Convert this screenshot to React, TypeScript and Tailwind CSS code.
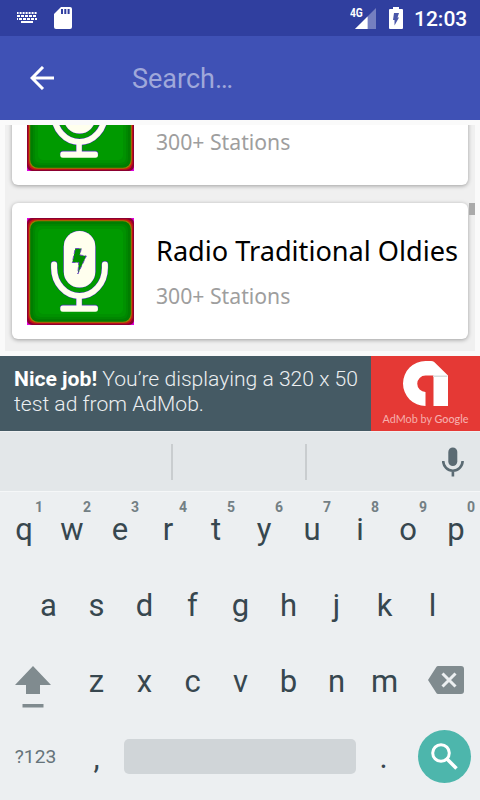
import React from 'react';

const TOP_ROW = ['q', 'w', 'e', 'r', 't', 'y', 'u', 'i', 'o', 'p'];
const HOME_ROW = ['a', 's', 'd', 'f', 'g', 'h', 'j', 'k', 'l'];
const BOTTOM_ROW = ['z', 'x', 'c', 'v', 'b', 'n', 'm'];

const STATIONS = [
  { id: 1, title: '', subtitle: '300+ Stations' },
  { id: 2, title: 'Radio Traditional Oldies', subtitle: '300+ Stations' },
];

const StatusBar: React.FC = () => (
  <div className="flex h-9 shrink-0 items-center bg-[#303f9f] text-white">
    <svg className="ml-[17px] h-3 w-5" viewBox="0 0 20 12" fill="none" stroke="white">
      <path d="M0 1h20" strokeWidth="1.8" strokeDasharray="2 1" strokeDashoffset="0.4" />
      <path d="M0 4h20" strokeWidth="1.8" strokeDasharray="3 1" />
      <path d="M0 7h20" strokeWidth="1.8" strokeDasharray="3 1" strokeDashoffset="2" />
      <path d="M4 10h12" strokeWidth="2" />
    </svg>
    <svg className="ml-[17px] h-[22px] w-[18px]" viewBox="0 0 18 22">
      <path d="M7 0h9a2 2 0 0 1 2 2v18a2 2 0 0 1-2 2H2a2 2 0 0 1-2-2V7z" fill="white" />
      <path d="M7 2h2v5H7zM10.3 2h2v5h-2zM13.6 2h2v5h-2z" fill="#303f9f" />
    </svg>
    <div className="ml-auto flex items-start">
      <span className="-mt-px w-3 text-[12px] leading-[12px] font-bold">
        <span className="inline-block origin-left scale-x-85">4G</span>
      </span>
      <svg className="-ml-[7px] h-[21px] w-[21px]" viewBox="0 0 21 21">
        <path d="M21 0v21H0z" fill="#757fc0" />
        <path d="M12.6 8.4V21H0z" fill="white" />
      </svg>
      <svg className="-mt-px ml-[13px] h-[22px] w-[14px]" viewBox="0 0 14 22">
        <path d="M4 0h6v2h3q1 0 1 1v18q0 1-1 1H1q-1 0-1-1V3q0-1 1-1h3z" fill="white" />
        <path d="M5 6h5l-1.5 4.5H10L5.5 18.5V13H4z" fill="#4a57aa" />
      </svg>
    </div>
    <span className="mt-[2px] mr-3 ml-[11px] w-[54px] text-[21px] leading-6 font-medium">12:03</span>
  </div>
);

const SearchBar: React.FC = () => (
  <div className="flex h-[84px] shrink-0 items-center bg-[#3f51b5]">
    <svg className="ml-[30px] h-6 w-6" viewBox="0 0 24 24" fill="none" stroke="white" strokeWidth="3">
      <path d="M24 12H2M13 1L2 12l11 11" />
    </svg>
    <span className="mt-0.5 ml-[78px] text-[27px] text-[#9fa8da]">Search…</span>
  </div>
);

const MicLogo: React.FC = () => (
  <svg className="h-[107px] w-[107px] shrink-0" viewBox="0 0 107 107">
    <rect width="107" height="107" fill="#e000e0" />
    <rect width="107" height="107" rx="5" fill="#8c0030" />
    <rect x="1.2" y="1.2" width="104.6" height="104.6" rx="7" fill="#c81414" />
    <rect x="2.2" y="2.2" width="102.6" height="102.6" rx="8" fill="#9a7800" />
    <rect x="3.2" y="3.2" width="100.6" height="100.6" rx="8" fill="#007d00" />
    <rect x="6" y="6" width="95" height="95" rx="6" fill="#008700" />
    <rect x="8" y="8" width="91" height="91" rx="5" fill="#009100" />
    <rect x="11" y="11" width="85" height="85" rx="5" fill="#009a00" />
    <g fill="#5028c8" stroke="#5028c8" strokeWidth="0.8">
      <rect x="36.8" y="13" width="31.5" height="56.5" rx="15.7" />
      <rect x="49.4" y="79" width="5.4" height="9" />
      <rect x="33.3" y="87.2" width="37.6" height="5" rx="2.5" />
    </g>
    <path d="M27.1 46.5V50a25.4 28 0 0 0 50.8 0v-3.5" fill="none" stroke="#5028c8" strokeWidth="6.8" strokeLinecap="round" />
    <g fill="#ffffee">
      <rect x="36.8" y="13" width="31.5" height="56.5" rx="15.7" />
      <rect x="49.4" y="79" width="5.4" height="10" />
      <rect x="33.3" y="87.4" width="37.6" height="6.4" rx="2.5" />
    </g>
    <path d="M27.1 46.5V50a25.4 28 0 0 0 50.8 0v-3.5" fill="none" stroke="#ffffee" strokeWidth="6" strokeLinecap="round" />
    <path
      d="M48.3 30.5h6l-1.5 6.5 6.5 1-8.5 18 1-11.5h-6.5z"
      fill="#008c00"
      stroke="#6a3cc8"
      strokeWidth="0.9"
      strokeDasharray="4 2"
    />
  </svg>
);

const StationCard: React.FC<{ title: string; subtitle: string }> = ({ title, subtitle }) => (
  <div className="flex h-[136px] shrink-0 items-center rounded-md bg-white pl-[14.5px] shadow-[0_1px_4px_rgba(0,0,0,0.35)]">
    <MicLogo />
    <div className="ml-[22.5px] flex flex-col whitespace-nowrap font-['Noto_Sans',sans-serif]">
      <span className="h-[50px] text-[27.15px] leading-[50px] text-black">{title}</span>
      <span className="h-10 text-[21.2px] leading-[39px] text-[#9e9e9e]">{subtitle}</span>
    </div>
  </div>
);

const StationList: React.FC = () => (
  <div className="h-[236px] shrink-0 bg-[#fafafa] p-[5px]">
    <div className="relative flex h-full flex-col justify-end gap-[18px] overflow-hidden bg-[#f0f0f0] px-[7px] pb-3">
      {STATIONS.map((station) => (
        <StationCard key={station.id} title={station.title} subtitle={station.subtitle} />
      ))}
      {/* Scroll thumb */}
      <div className="absolute top-[78px] right-0 h-3 w-1.5 bg-[#aaaaaa]" />
    </div>
  </div>
);

const AdBanner: React.FC = () => (
  <div className="flex h-[75px] shrink-0 bg-[#455a64]">
    <p className="w-[371px] pt-[10px] pl-[14px] text-[21.12px] leading-[25px] font-light whitespace-nowrap text-[#eceff1]">
      <b className="font-bold text-white">Nice job!</b> You’re displaying a 320 x 50
      <br />
      test ad from AdMob.
    </p>
    <div className="flex flex-1 flex-col items-center bg-[#e53935] pt-[5px]">
      <svg className="h-[45px] w-[45px]" viewBox="0 0 45 45">
        <path d="M22.5 0H28q2 0 3.2 1L45 14.5V45H30.5V14.5h-8a8.2 8.2 0 0 0 0 16.5V45A22.5 22.5 0 0 1 22.5 0z" fill="white" />
        <path d="M30 14.5h15l-1 1.5H30z" fill="#d8dcdd" />
      </svg>
      <span className="mt-[5px] text-[10.8px] leading-[16px] whitespace-nowrap text-[#f6aeac] font-['Lato',sans-serif]">
        AdMob by <span className="font-medium">Google</span>
      </span>
    </div>
  </div>
);

const Key: React.FC<{ label: string; hint?: string }> = ({ label, hint }) => (
  <div
    className={`relative flex w-12 justify-center text-[31px] text-[#37474f] ${
      hint ? 'leading-[76px]' : 'pl-px leading-[78px]'
    }`}
  >
    {label}
    {hint && (
      <span className="absolute top-[7px] right-[5px] text-[14px] leading-4 font-bold text-[#737f84]">{hint}</span>
    )}
  </div>
);

const Keyboard: React.FC = () => (
  <div className="flex flex-1 flex-col bg-[#eceff1]">
    {/* Suggestion strip */}
    <div className="flex h-[60px] shrink-0 items-center border-t border-[#eff1f2] bg-[#e3e7e9]">
      <div className="ml-[171px] h-9 w-0.5 bg-[#c9cdcf]" />
      <div className="ml-[132px] h-9 w-0.5 bg-[#c9cdcf]" />
      <svg className="ml-[135px] h-[30px] w-[22px]" viewBox="0 0 22 30">
        <rect x="6.3" y="0.5" width="9" height="18.5" rx="4.5" fill="#5b6b73" />
        <path d="M1.2 14a9.7 9.7 0 0 0 19.4 0M10.9 23v6.5" fill="none" stroke="#5b6b73" strokeWidth="2.6" />
      </svg>
    </div>
    <div className="flex h-[76px] border-t border-[#f5f7f8]">
      {TOP_ROW.map((k, i) => (
        <Key key={k} label={k} hint={String((i + 1) % 10)} />
      ))}
    </div>
    <div className="flex h-[76px] justify-center">
      {HOME_ROW.map((k) => (
        <Key key={k} label={k} />
      ))}
    </div>
    <div className="flex h-[76px]">
      <div className="w-[72px] pt-[23px] pl-[15px]">
        <svg className="h-[42px] w-9" viewBox="0 0 36 42" fill="#808b8f">
          <path d="M18 0l18 19H25v9H11v-9H0zM7.5 38h21v3.5h-21z" />
        </svg>
      </div>
      {BOTTOM_ROW.map((k) => (
        <Key key={k} label={k} />
      ))}
      <svg className="mt-[23px] ml-5 h-7 w-9" viewBox="0 0 36 28">
        <path d="M10 0h23a3 3 0 0 1 3 3v22a3 3 0 0 1-3 3H10q-1 0-1.5-.8L0 14 8.5.8Q9 0 10 0z" fill="#808b8f" />
        <path d="M14.5 7.5l13 13M27.5 7.5l-13 13" stroke="#eceff1" strokeWidth="3" />
      </svg>
    </div>
    <div className="flex flex-1">
      <span className="w-[72px] pr-px text-center text-[19.2px] leading-[75px] text-[#65737a]">?123</span>
      <Key label="," />
      <div className="mt-5 ml-1 h-[35px] w-[232px] rounded-[5px] bg-[#d0d5d8]" />
      <div className="ml-[3px] mr-px">
        <Key label="." />
      </div>
      <div className="mt-[11px] ml-[10px] flex h-[53px] w-[53px] items-center justify-center rounded-full bg-[#4db6ac]">
        <svg className="h-[27px] w-[27px]" viewBox="0 0 27 27" fill="none" stroke="white">
          <circle cx="10" cy="10" r="8.3" strokeWidth="3" />
          <path d="M16 16l9.5 9.5" strokeWidth="3.5" />
        </svg>
      </div>
    </div>
  </div>
);

export default function App() {
  return (
    <div className="flex h-[800px] w-[480px] flex-col overflow-hidden font-['Roboto',sans-serif]">
      <StatusBar />
      <SearchBar />
      <StationList />
      <AdBanner />
      <Keyboard />
    </div>
  );
}
